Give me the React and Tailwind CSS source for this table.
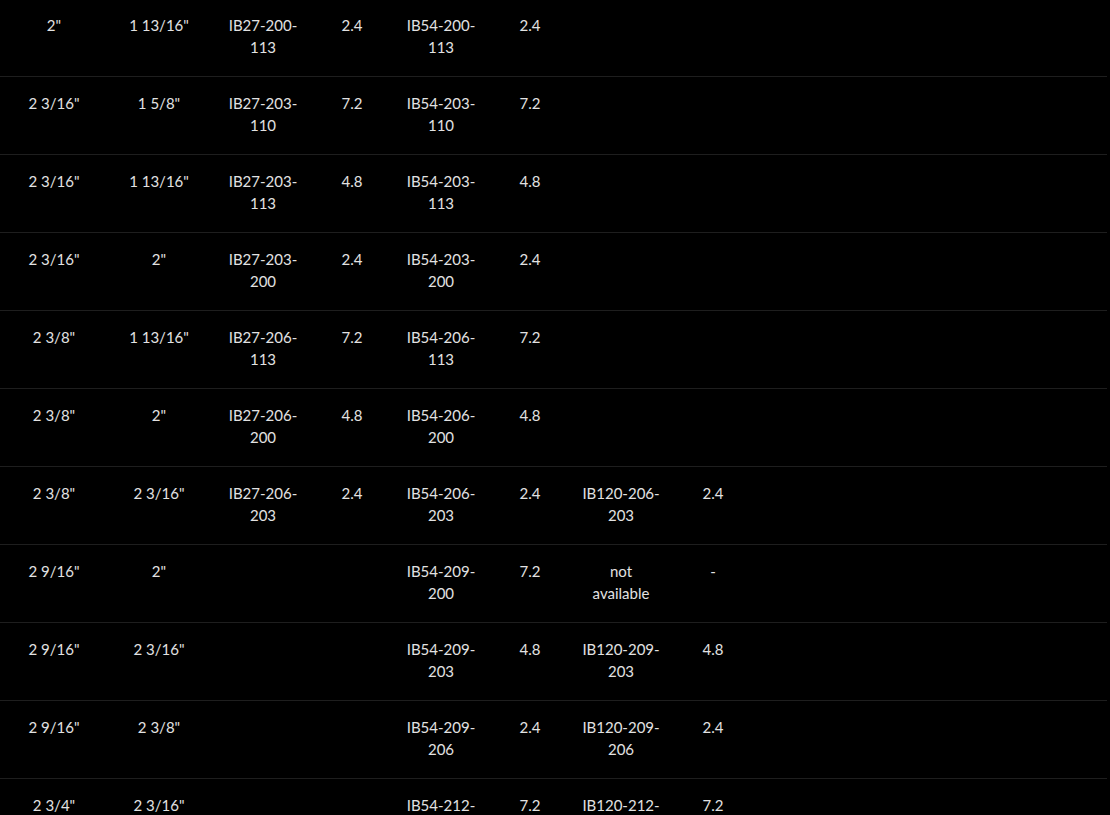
const rows = [
  ['2"', '1 13/16"', ['IB27-200-', '113'], '2.4', ['IB54-200-', '113'], '2.4', null, null],
  ['2 3/16"', '1 5/8"', ['IB27-203-', '110'], '7.2', ['IB54-203-', '110'], '7.2', null, null],
  ['2 3/16"', '1 13/16"', ['IB27-203-', '113'], '4.8', ['IB54-203-', '113'], '4.8', null, null],
  ['2 3/16"', '2"', ['IB27-203-', '200'], '2.4', ['IB54-203-', '200'], '2.4', null, null],
  ['2 3/8"', '1 13/16"', ['IB27-206-', '113'], '7.2', ['IB54-206-', '113'], '7.2', null, null],
  ['2 3/8"', '2"', ['IB27-206-', '200'], '4.8', ['IB54-206-', '200'], '4.8', null, null],
  ['2 3/8"', '2 3/16"', ['IB27-206-', '203'], '2.4', ['IB54-206-', '203'], '2.4', ['IB120-206-', '203'], '2.4'],
  ['2 9/16"', '2"', null, null, ['IB54-209-', '200'], '7.2', ['not', 'available'], '-'],
  ['2 9/16"', '2 3/16"', null, null, ['IB54-209-', '203'], '4.8', ['IB120-209-', '203'], '4.8'],
  ['2 9/16"', '2 3/8"', null, null, ['IB54-209-', '206'], '2.4', ['IB120-209-', '206'], '2.4'],
  ['2 3/4"', '2 3/16"', null, null, ['IB54-212-', '203'], '7.2', ['IB120-212-', '203'], '7.2'],
];

const widths = ['w-[108px]', 'w-[102px]', 'w-[106px]', 'w-[72px]', 'w-[106px]', 'w-[72px]', 'w-[110px]', 'w-[74px]'];

const Cell = ({ value, width }) => (
  <div className={`${width} shrink-0 text-center`}>
    {Array.isArray(value) ? value.map((line, i) => <div key={i}>{line}</div>) : value}
  </div>
);

export default function App() {
  return (
    <div className="h-screen w-full bg-black overflow-hidden" style={{ fontFamily: '"Lato", "Liberation Sans", sans-serif' }}>
      <div className="mt-[-1px] w-[1107px] text-[15px] leading-[22px] text-[#e2e2e2]">
        {rows.map((row, r) => (
          <div key={r} className="flex h-[78px] border-b border-[#1e1e1e] pt-[15px]">
            {row.map((v, c) => (
              <Cell key={c} value={v} width={widths[c]} />
            ))}
          </div>
        ))}
      </div>
    </div>
  );
}
